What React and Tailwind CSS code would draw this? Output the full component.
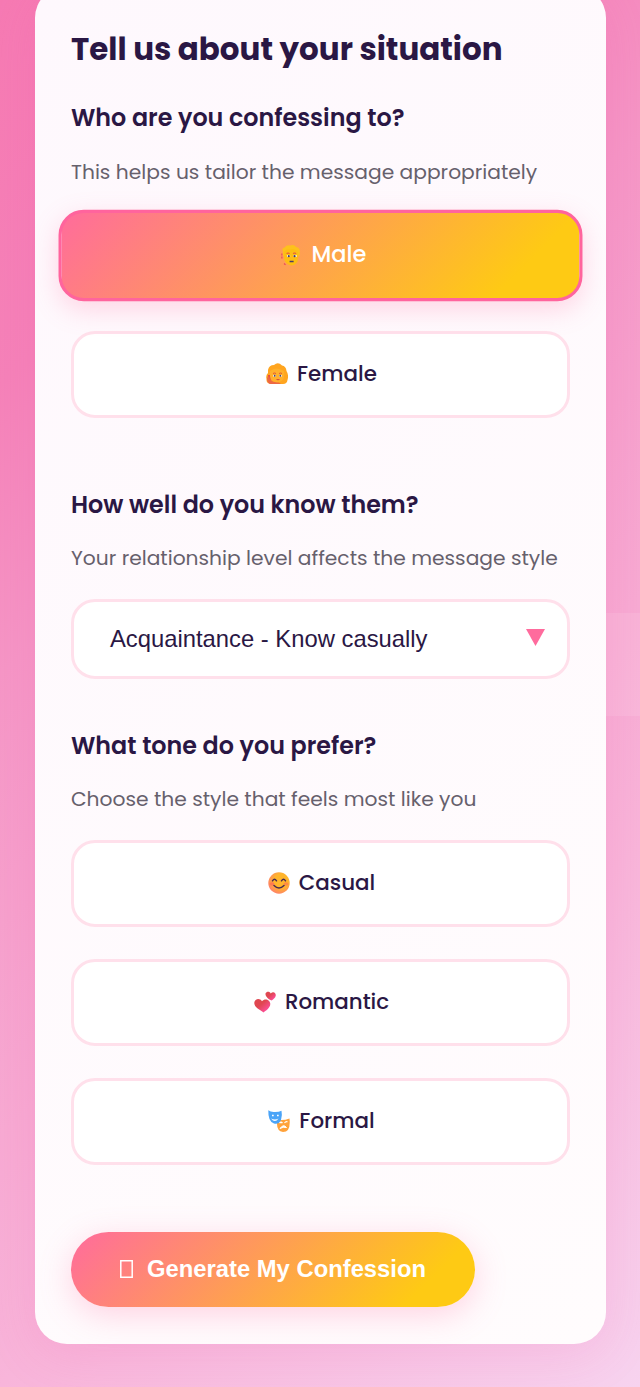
import React from 'react';

function ManIcon() {
  return (
    <svg className="h-[21px] w-[21px] shrink-0" viewBox="0 0 22 22">
      <path d="M3 7 Q1 4 4.500 3 Q7 0 10 1 Q14-.5 16 2.500 Q20 3 19.500 7 Q20.500 10 18.500 12 L17 12 L4 12 Q2 11 3 7Z" fill="#fdc11c" />
      <path d="M4 7 Q7 4 10 5 Q15 3 18 8 V13 Q18 20 11.500 21 Q5 20 4 14Z" fill="#fdbd14" />
      <path d="M1.800 9v6M4 19l2 2" stroke="#e84a5f" strokeWidth="1.200" strokeDasharray="2 1" fill="none" />
      <path d="M6.500 9q1.500-1 3 0M13 9q1.500-1 3 0" stroke="#e5533d" strokeWidth="1.200" fill="none" />
      <path d="M7 11.500h3M13.500 11.500h3" stroke="#fff" strokeWidth="1.800" />
      <circle cx="8.700" cy="11.700" r="1.100" fill="#493c68" />
      <circle cx="14.500" cy="11.700" r="1.100" fill="#493c68" />
      <path d="M9.500 17h4" stroke="#493c68" strokeWidth="1.300" />
    </svg>
  );
}

function WomanIcon() {
  return (
    <svg className="h-[22px] w-[22px] shrink-0" viewBox="0 0 22 22">
      <path d="M2 7 Q3 2 8 2 Q12-1.500 16 2.500 Q20 3 20.500 8 Q23 12 21.500 17 Q21 21 17 21 H5 Q0 21 .5 16 Q-.5 12 2 10Z" fill="#ffa51f" />
      <path d="M2 12 Q1 17 4 20 L7 21 Q4 17 4 12Z" fill="#e84b40" />
      <path d="M1 15 Q1 21 5 21 H15 L12 19 Q4 20 3 13Z" fill="#ed6844" />
      <path d="M4 8 Q10 3 18 8 Q20 18 12 19.500 Q5 19 4 13Z" fill="#ffb02c" />
      <path d="M7 10.500q1.500-1 3 0M13 10.500q1.500-1 3 0" stroke="#e45732" fill="none" />
      <path d="M7 12.700h3M13 12.700h3" stroke="#fff" strokeWidth="1.500" />
      <circle cx="8.700" cy="12.800" r="1" fill="#51466f" />
      <circle cx="14.300" cy="12.800" r="1" fill="#51466f" />
      <path d="M10 16.300h4q-2 2-4 0" fill="#c83242" />
    </svg>
  );
}

function SmileIcon() {
  return (
    <svg className="h-[22px] w-[22px] shrink-0" viewBox="0 0 22 22">
      <defs>
        <radialGradient id="smileFace" cx=".6" cy=".4" r=".65">
          <stop offset=".5" stopColor="#ffb52b" />
          <stop offset="1" stopColor="#ff806d" />
        </radialGradient>
      </defs>
      <circle cx="11" cy="11" r="10.700" fill="url(#smileFace)" />
      <ellipse cx="4" cy="12" rx="2.500" ry="1.800" fill="#ff7950" />
      <ellipse cx="18" cy="12" rx="2.500" ry="1.800" fill="#ff8b42" />
      <path d="M4.500 8.800q2-3 4 0M13.500 8.800q2-3 4 0M6 13.500q5 5 10 0" fill="none" stroke="#4a2b51" strokeWidth="1.500" strokeLinecap="round" />
    </svg>
  );
}

function HeartsIcon() {
  return (
    <svg className="h-[22px] w-[22px] shrink-0" viewBox="0 0 22 22">
      <defs>
        <linearGradient id="heartFill" x1="0" y1="0" x2="1" y2="1">
          <stop offset=".4" stopColor="#df4650" />
          <stop offset=".85" stopColor="#ff4f9f" />
        </linearGradient>
      </defs>
      <path d="M9.500 21.500 C6.500 19 0 16.500 .3 11.800 C.8 7.500 6 6.800 8 10.300 C10.500 6.800 16.300 8.500 16.300 13 C16.300 17 11.500 20 9.500 21.500Z" fill="url(#heartFill)" />
      <path d="M17.500 9.500 C15 8.500 11 5.500 11.500 2.500 C12.500 0 16 .2 16.700 2.500 C19 0 22 1.500 21.800 4.500 C21.500 7 19 8.600 17.500 9.500Z" fill="url(#heartFill)" />
    </svg>
  );
}

function MasksIcon() {
  return (
    <svg className="h-[22px] w-[22px] shrink-0" viewBox="0 0 22 22">
      <path d="M9 9.500 Q15 11 21.500 8.500 Q23 22 15 22 Q9 21 9 14Z" fill="#ffa23a" />
      <path d="M.3 .3 Q3 2.500 7 2 Q11 2 13.500 .8 Q14.500 5 13 10 Q10.500 15 6 13.500 Q0 12 .3 .3Z" fill="#4ba4f7" />
      <path d="M4 5.500h1.700M9 5.500h1.700" stroke="#fff" strokeWidth="1.400" />
      <path d="M3 8.500q4 2 7.500 0q-3.500 5-7.500 0" fill="#fff" />
      <path d="M11.500 13q1.500-1.500 3 0M16.500 13q1.500-2 3-1" stroke="#fff" strokeWidth="1.200" fill="none" />
      <path d="M12 18.500q3.500-5 6.500-1q-3-1-6.500 1" fill="#fff" stroke="#fff" />
    </svg>
  );
}

function Heading({ children, className }) {
  return <h2 className={`h-[30px] text-[23.8px] leading-[30px] font-semibold whitespace-nowrap ${className}`}>{children}</h2>;
}

function Hint({ children, className = '' }) {
  return <p className={`h-6 text-[20.23px] leading-6 whitespace-nowrap text-[#66606c] ${className}`}>{children}</p>;
}

function Option({ icon, children, className = '', spacing = 'pb-[2px] pl-[2px]' }) {
  return (
    <button className={`flex h-[87px] w-full shrink-0 items-center justify-center gap-[9px] rounded-[24px] border-[3px] border-[#ffe0eb] bg-white text-[21.4px] leading-7 font-medium ${spacing} ${className}`}>
      {icon}
      <span className="block whitespace-nowrap">{children}</span>
    </button>
  );
}

export default function App() {
  return (
    <main className="relative h-[1387px] w-[640px] overflow-hidden bg-[linear-gradient(140deg,#f67ab3_0%,#f582b9_20%,#f596c6_35%,#f8b5da_72%,#f7d3ef_100%)] pr-[34px] pl-[35px] font-[Poppins,Inter,sans-serif] text-[#2a1744]">
      <div className="absolute top-[613px] right-0 h-[103px] w-[80px] bg-white/10" />
      <section className="relative -mt-[14px] flex h-[1358px] flex-col rounded-[32px] bg-[linear-gradient(135deg,#fef8fd,#fffcfd)] px-9 pt-[44px] shadow-[0_10px_50px_rgba(240,80,160,0.15)]">
        <h1 className="h-10 text-[30.94px] leading-10 font-bold whitespace-nowrap">Tell us about your situation</h1>
        <Heading className="mt-[33px]">Who are you confessing to?</Heading>
        <Hint className="mt-[27px]">This helps us tailor the message appropriately</Hint>
        <Option icon={<ManIcon />} spacing="pb-px pl-[5px]" className="mt-[28px] scale-105 border-[#ff649d]! bg-[linear-gradient(135deg,#ff6b9d,#feca14_85%)] bg-origin-border text-white shadow-[0_8px_24px_rgba(255,107,157,0.25)]">Male</Option>
        <Option icon={<WomanIcon />} className="mt-8">Female</Option>
        <Heading className="mt-[72px]">How well do you know them?</Heading>
        <Hint className="mt-[26px]">Your relationship level affects the message style</Hint>
        <button className="mt-[29px] flex h-20 shrink-0 items-center justify-between rounded-[24px] border-[3px] border-[#ffe0eb] bg-white pr-[22px] pl-9 text-[23.8px] leading-7 font-normal">
          <span className="font-['Liberation_Sans',Arial,sans-serif]">Acquaintance - Know casually</span>
          <svg className="mb-1 h-[17px] w-[19px]" viewBox="0 0 19 17"><path d="M0 0h19L9.500 17z" fill="#ff6b9d" /></svg>
        </button>
        <Heading className="mt-[52px]">What tone do you prefer?</Heading>
        <Hint className="mt-[26px]">Choose the style that feels most like you</Hint>
        <Option icon={<SmileIcon />} className="mt-[29px]">Casual</Option>
        <Option icon={<HeartsIcon />} className="mt-8">Romantic</Option>
        <Option icon={<MasksIcon />} className="mt-8">Formal</Option>
        <button className="mt-[67px] flex h-[75px] w-[404px] shrink-0 items-center rounded-full bg-[linear-gradient(135deg,#ff6b9d,#feca14_85%)] pb-[1px] pl-[49px] font-['Liberation_Sans',Arial,sans-serif] text-[23.8px] leading-7 font-bold text-white shadow-[0_8px_32px_rgba(255,107,157,0.28)]">
          <svg className="mr-[14px] h-[18px] w-[13px]" viewBox="0 0 13 18"><path d="M.8.800h11.400v16.400H.8z" fill="none" stroke="currentColor" strokeWidth="1.500" /></svg>
          <span className="whitespace-nowrap">Generate My Confession</span>
        </button>
      </section>
    </main>
  );
}
